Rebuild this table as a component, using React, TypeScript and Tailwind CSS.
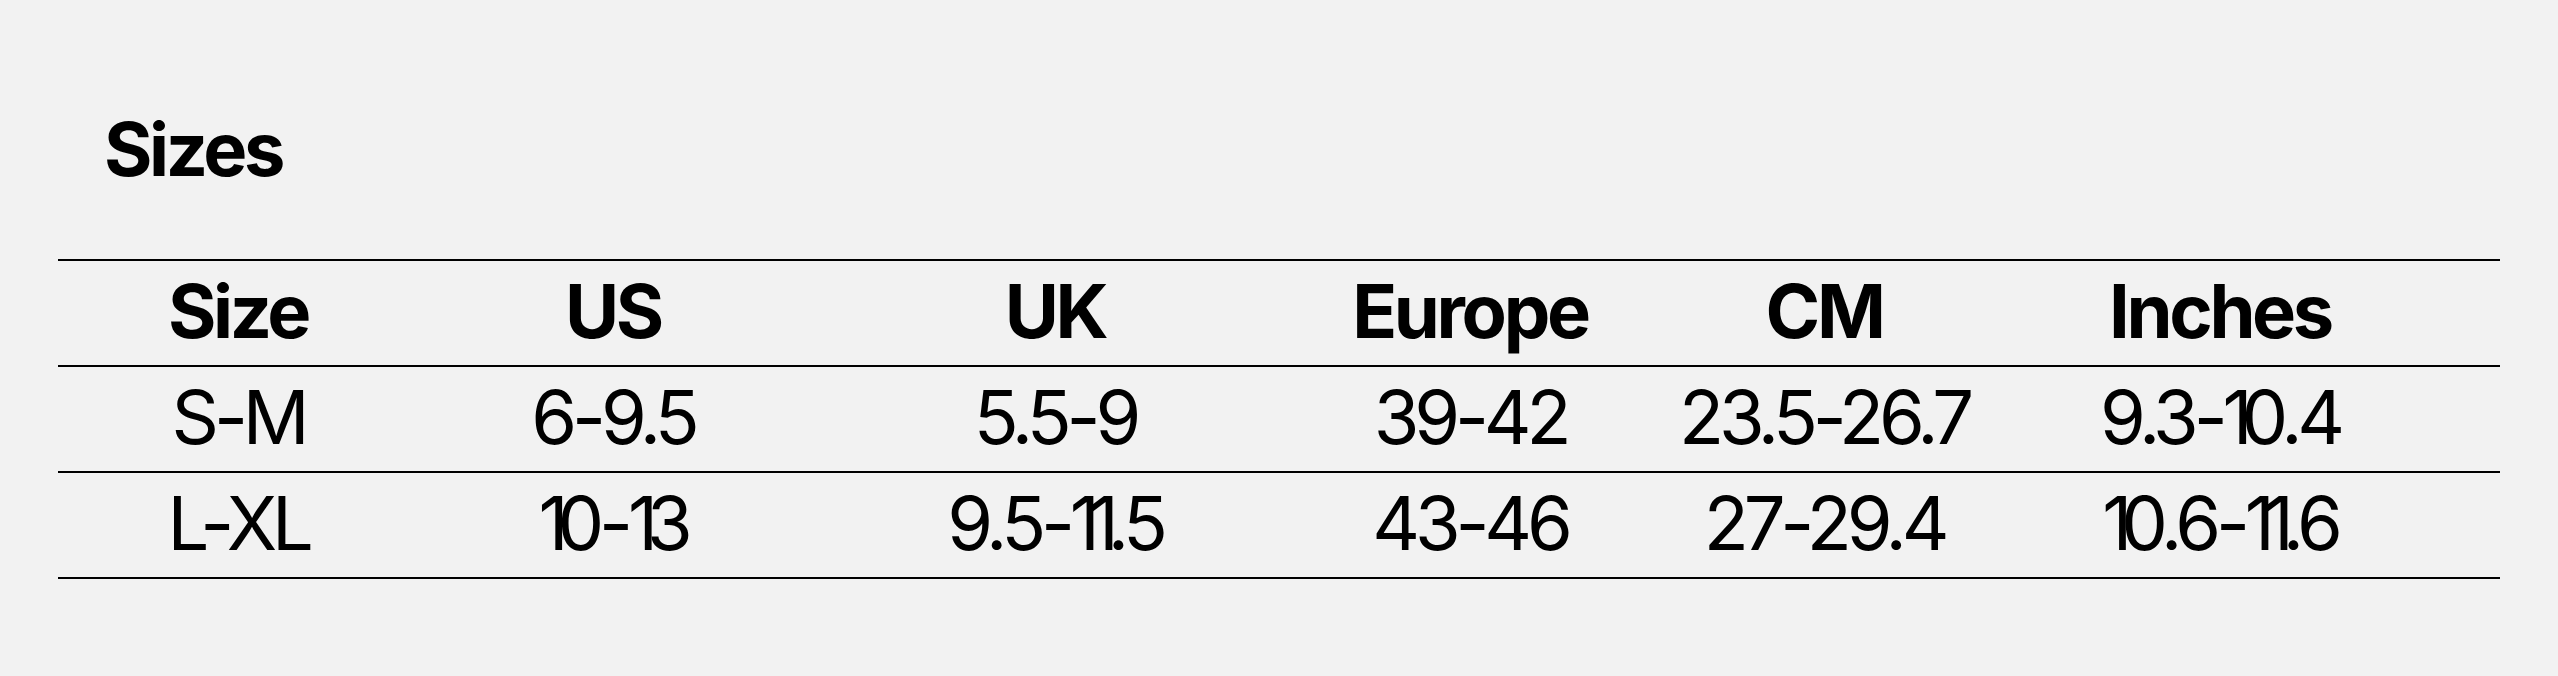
const headers = ["Size", "US", "UK", "Europe", "CM", "Inches"];

const rows = [
  ["S-M", "6-9.5", "5.5-9", "39-42", "23.5-26.7", "9.3-10.4"],
  ["L-XL", "10-13", "9.5-11.5", "43-46", "27-29.4", "10.6-11.6"],
];

const cols = "grid grid-cols-[360px_390px_494px_336px_372px_420px_1fr]";

// the "1" in the original face is much narrower than Inter's
function Cell({ text }: { text: string }) {
  return (
    <div className="text-center">
      {text.split("").map((ch, i) =>
        ch === "1" ? (
          <span key={i} className="tracking-[-0.15em]">
            1
          </span>
        ) : (
          <span key={i}>{ch}</span>
        )
      )}
    </div>
  );
}

export default function App() {
  return (
    <div className="min-h-[676px] bg-[#f2f2f2] px-[58px] pt-[112px] font-['Inter',sans-serif] text-black">
      {/* Title */}
      <h2 className="pl-[46px] text-[74px] leading-none font-bold tracking-[-0.046em]">
        Sizes
      </h2>

      {/* Table */}
      <div className="mt-[73px] border-b-2 border-black">
        <div className={`${cols} h-[106px] items-center border-t-2 border-black pb-[5px] text-[74px] leading-none font-bold tracking-[-0.045em]`}>
          {headers.map((h) => (
            <div key={h} className="text-center">
              {h}
            </div>
          ))}
        </div>
        {rows.map((r) => (
          <div
            key={r[0]}
            className={`${cols} h-[106px] items-center border-t-2 border-black pb-[5px] text-[74px] leading-none tracking-[-0.07em]`}
          >
            {r.map((c, i) => (
              <Cell key={i} text={c} />
            ))}
          </div>
        ))}
      </div>
    </div>
  );
}
